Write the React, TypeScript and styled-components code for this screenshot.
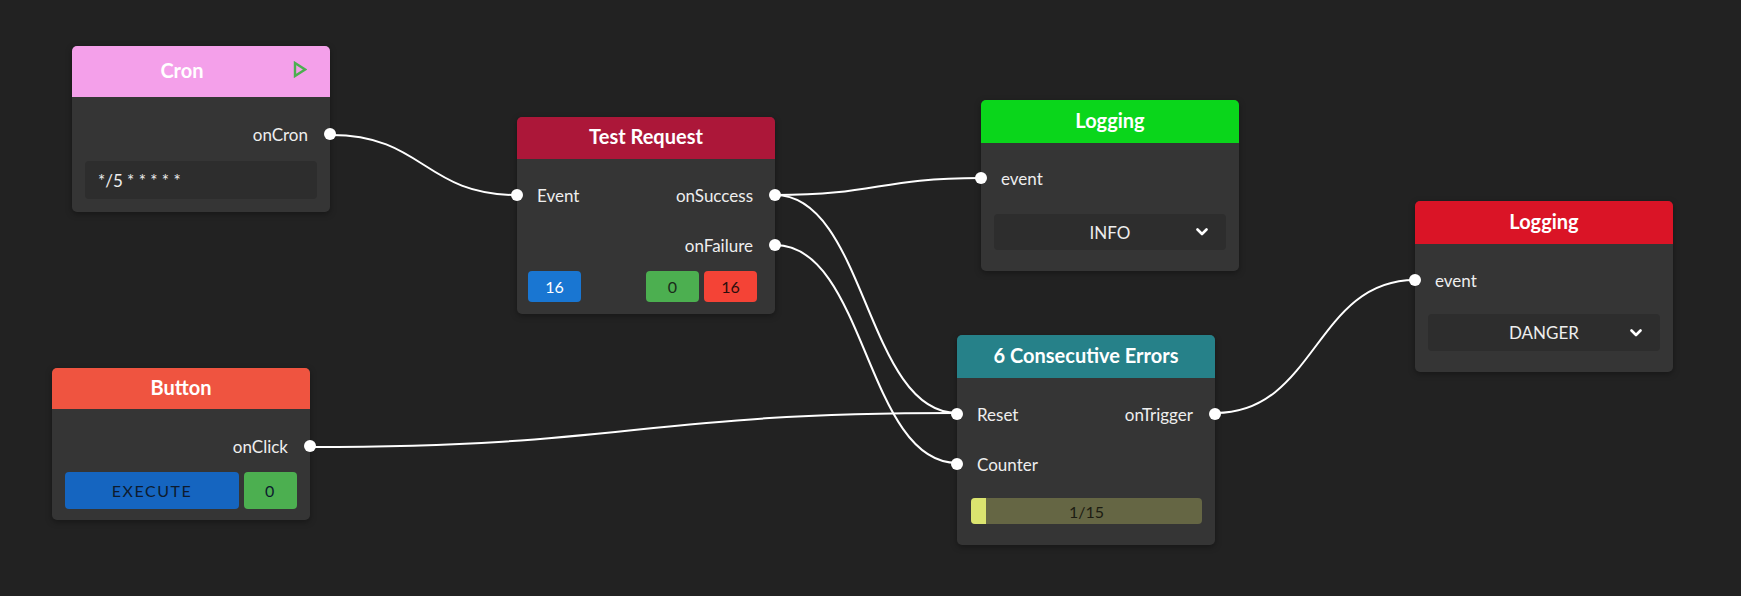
import { createGlobalStyle } from "styled-components";
import styled from "styled-components";

const GlobalStyle = createGlobalStyle`
  body {
    margin: 0;
    background: #222222;
    font-family: Lato, "Noto Sans", sans-serif;
  }
`;

const Canvas = styled.div`
  position: relative;
  width: 1741px;
  height: 596px;
  overflow: hidden;
  background: #222222;
`;

const EdgeLayer = styled.svg`
  position: absolute;
  left: 0;
  top: 0;
  width: 100%;
  height: 100%;
  pointer-events: none;
`;

const Node = styled.div<{ $x: number; $y: number }>`
  position: absolute;
  left: ${(p) => p.$x}px;
  top: ${(p) => p.$y}px;
  width: 258px;
  background: #353535;
  border-radius: 5px;
  box-shadow: 0 2px 6px rgba(0, 0, 0, 0.35);
`;

const Header = styled.div<{ $color: string; $height: number }>`
  display: flex;
  align-items: center;
  height: ${(p) => p.$height}px;
  background: ${(p) => p.$color};
  border-radius: 5px 5px 0 0;
`;

const Title = styled.div`
  flex: 1;
  padding-bottom: 4px;
  text-align: center;
  color: #ffffff;
  font-weight: 700;
  font-size: 20px;
`;

const PlayButton = styled.div`
  width: 16px;
  margin-right: 22px;
  padding-bottom: 4px;
  display: flex;
  justify-content: center;
`;

const Body = styled.div<{ $top?: number; $bottom: number }>`
  padding: ${(p) => p.$top ?? 12}px 0 ${(p) => p.$bottom}px;
`;

const PortRow = styled.div`
  position: relative;
  height: 50px;
  display: flex;
  align-items: center;
  justify-content: space-between;
  padding: 0 22px 0 20px;
  color: #eeeeee;
  font-size: 17px;
`;

const Label = styled.span<{ $right?: boolean }>`
  margin-left: ${(p) => (p.$right ? "auto" : "0")};
`;

const Handle = styled.span<{ $side: "left" | "right" }>`
  position: absolute;
  top: 50%;
  ${(p) => p.$side}: -6px;
  width: 12px;
  height: 12px;
  margin-top: -6px;
  border-radius: 50%;
  background: #ffffff;
`;

const Controls = styled.div<{ $top: number; $padL?: number; $padR?: number }>`
  display: flex;
  gap: 5px;
  padding: ${(p) => p.$top}px ${(p) => p.$padR ?? 13}px 0 ${(p) => p.$padL ?? 13}px;
`;

const TextInput = styled.div`
  flex: 1;
  height: 38px;
  box-sizing: border-box;
  padding: 0 13px;
  display: flex;
  align-items: center;
  background: #2d2d2d;
  border-radius: 4px;
  color: #eeeeee;
  font-size: 17px;
`;

const Select = styled.div<{ $height: number }>`
  position: relative;
  flex: 1;
  height: ${(p) => p.$height}px;
  display: flex;
  align-items: center;
  justify-content: center;
  background: #2d2d2d;
  border-radius: 4px;
  color: #eeeeee;
  font-size: 17px;
`;

const Chevron = styled.svg`
  position: absolute;
  right: 18px;
  top: 50%;
  margin-top: -4px;
`;

const Badge = styled.div<{ $bg: string; $fg: string }>`
  width: 53px;
  height: 31px;
  display: flex;
  align-items: center;
  justify-content: center;
  background: ${(p) => p.$bg};
  color: ${(p) => p.$fg};
  border-radius: 4px;
  font-size: 16px;
`;

const Spacer = styled.div`
  flex: 1;
`;

const ActionButton = styled.div<{ $bg: string; $grow?: boolean }>`
  ${(p) => (p.$grow ? "flex: 1;" : "width: 53px;")}
  height: 37px;
  display: flex;
  align-items: center;
  justify-content: center;
  background: ${(p) => p.$bg};
  color: #0d1b2e;
  border-radius: 4px;
  font-size: 16px;
  letter-spacing: 1.5px;
`;

const Progress = styled.div`
  position: relative;
  flex: 1;
  height: 26px;
  display: flex;
  align-items: center;
  justify-content: center;
  background: #656644;
  border-radius: 4px;
  overflow: hidden;
  color: #1c1c12;
  font-size: 16px;
`;

const ProgressFill = styled.div`
  position: absolute;
  left: 0;
  top: 0;
  bottom: 0;
  background: #dbe46f;
`;

const ProgressText = styled.span`
  position: relative;
`;

type Pt = [number, number];

const edges: [Pt, Pt][] = [
  [[331, 135], [517, 195]],
  [[775, 195], [981, 178]],
  [[775, 195], [957, 413]],
  [[775, 245], [957, 463]],
  [[311, 447], [957, 413]],
  [[1216, 413], [1415, 280]],
];

function bezier([sx, sy]: Pt, [tx, ty]: Pt) {
  const cx = (sx + tx) / 2;
  return `M${sx},${sy} C${cx},${sy} ${cx},${ty} ${tx},${ty}`;
}

function Port({ left, right }: { left?: string; right?: string }) {
  return (
    <PortRow>
      {left && (
        <>
          <Handle $side="left" />
          <Label>{left}</Label>
        </>
      )}
      {right && (
        <>
          <Label $right>{right}</Label>
          <Handle $side="right" />
        </>
      )}
    </PortRow>
  );
}

function ChevronDown() {
  return (
    <Chevron width="12" height="8" viewBox="0 0 12 8">
      <path d="M1.5 1.5 L6 6 L10.5 1.5" fill="none" stroke="#ffffff" strokeWidth="2.6" strokeLinecap="round" strokeLinejoin="round" />
    </Chevron>
  );
}

export default function App() {
  const count = 1;
  const total = 15;
  return (
    <>
      <GlobalStyle />
      <Canvas>
        <EdgeLayer>
          {edges.map(([s, t], i) => (
            <path key={i} d={bezier(s, t)} fill="none" stroke="#ffffff" strokeWidth="2" />
          ))}
        </EdgeLayer>

        <Node $x={72} $y={46}>
          <Header $color="#f4a0ea" $height={51}>
            <Title>Cron</Title>
            <PlayButton>
              <svg width="14" height="17" viewBox="0 0 14 17">
                <path d="M2 2 L12 8.5 L2 15 Z" fill="none" stroke="#4caf50" strokeWidth="2.4" strokeLinejoin="miter" />
              </svg>
            </PlayButton>
          </Header>
          <Body $bottom={13}>
            <Port right="onCron" />
            <Controls $top={2}>
              <TextInput>*/5 * * * * *</TextInput>
            </Controls>
          </Body>
        </Node>

        <Node $x={517} $y={117}>
          <Header $color="#ac1739" $height={42}>
            <Title>Test Request</Title>
          </Header>
          <Body $top={11} $bottom={12}>
            <Port left="Event" right="onSuccess" />
            <Port right="onFailure" />
            <Controls $top={1} $padL={11} $padR={18}>
              <Badge $bg="#1976d2" $fg="#ffffff">16</Badge>
              <Spacer />
              <Badge $bg="#4caf50" $fg="#1a2a1a">0</Badge>
              <Badge $bg="#f44336" $fg="#2a0e0c">16</Badge>
            </Controls>
          </Body>
        </Node>

        <Node $x={981} $y={100}>
          <Header $color="#0ad61b" $height={43}>
            <Title>Logging</Title>
          </Header>
          <Body $top={10} $bottom={21}>
            <Port left="event" />
            <Controls $top={11}>
              <Select $height={36}>
                INFO
                <ChevronDown />
              </Select>
            </Controls>
          </Body>
        </Node>

        <Node $x={1415} $y={201}>
          <Header $color="#da1426" $height={43}>
            <Title>Logging</Title>
          </Header>
          <Body $top={11} $bottom={21}>
            <Port left="event" />
            <Controls $top={9}>
              <Select $height={37}>
                DANGER
                <ChevronDown />
              </Select>
            </Controls>
          </Body>
        </Node>

        <Node $x={52} $y={368}>
          <Header $color="#ef5440" $height={41}>
            <Title>Button</Title>
          </Header>
          <Body $bottom={11}>
            <Port right="onClick" />
            <Controls $top={1}>
              <ActionButton $bg="#1565c0" $grow>EXECUTE</ActionButton>
              <ActionButton $bg="#4caf50">0</ActionButton>
            </Controls>
          </Body>
        </Node>

        <Node $x={957} $y={335}>
          <Header $color="#268189" $height={43}>
            <Title>6 Consecutive Errors</Title>
          </Header>
          <Body $top={11} $bottom={21}>
            <Port left="Reset" right="onTrigger" />
            <Port left="Counter" />
            <Controls $top={9} $padL={14}>
              <Progress>
                <ProgressFill style={{ width: `${(count / total) * 100}%` }} />
                <ProgressText>
                  {count}/{total}
                </ProgressText>
              </Progress>
            </Controls>
          </Body>
        </Node>
      </Canvas>
    </>
  );
}
